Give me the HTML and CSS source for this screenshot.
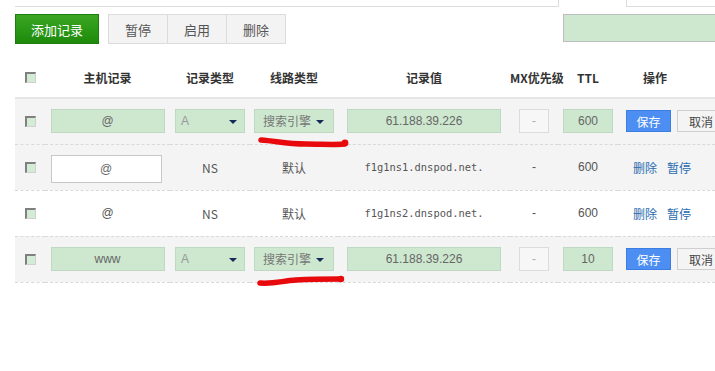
FILE: index.html
```html
<!DOCTYPE html>
<html lang="zh-CN">

<head>
    <meta charset="UTF-8">
    <title>记录管理</title>
    <link rel="stylesheet" href="styles.css">
</head>

<body>
    <div class="top-strip">
        <div class="strip-box strip-left"></div>
        <div class="strip-box strip-right"></div>
    </div>

    <div class="toolbar">
        <button class="btn-add">添加记录</button>
        <div class="btn-group">
            <button class="btn-gray">暂停</button>
            <button class="btn-gray">启用</button>
            <button class="btn-gray">删除</button>
        </div>
        <div class="search-box"></div>
    </div>

    <table class="records">
        <colgroup>
            <col style="width:30px">
            <col style="width:125px">
            <col style="width:80px">
            <col style="width:88px">
            <col style="width:172px">
            <col style="width:48px">
            <col style="width:60px">
            <col style="width:112px">
        </colgroup>
        <thead>
            <tr>
                <th><span class="check"></span></th>
                <th>主机记录</th>
                <th>记录类型</th>
                <th>线路类型</th>
                <th>记录值</th>
                <th>MX优先级</th>
                <th>TTL</th>
                <th class="th-op">操作</th>
            </tr>
        </thead>
        <tbody>
            <!-- ligne en édition -->
            <tr class="editing">
                <td><span class="check"></span></td>
                <td><span class="field f-host">@</span></td>
                <td><span class="field f-select f-type">A<i class="caret"></i></span></td>
                <td class="mark">
                    <span class="field f-select f-line">搜索引擎<i class="caret"></i></span>
                    <svg class="scribble s1" width="96" height="14" viewBox="0 0 96 14">
                        <path d="M5 4 C20 5 30 8 50 8 C65 8 78 9 88 8" stroke="#e8090c" stroke-width="5.5" fill="none" stroke-linecap="round" />
                        <circle cx="89" cy="7" r="3.4" fill="#e8090c" />
                    </svg>
                </td>
                <td><span class="field f-value">61.188.39.226</span></td>
                <td><span class="field f-mx">-</span></td>
                <td><span class="field f-ttl">600</span></td>
                <td class="td-op"><button class="btn-save">保存</button><button class="btn-cancel">取消</button></td>
            </tr>
            <tr class="gray">
                <td><span class="check"></span></td>
                <td><span class="field f-plain">@</span></td>
                <td>NS</td>
                <td>默认</td>
                <td class="mono">f1g1ns1.dnspod.net.</td>
                <td class="dash">-</td>
                <td class="num">600</td>
                <td class="td-op links"><a href="#">删除</a><a href="#">暂停</a></td>
            </tr>
            <tr>
                <td><span class="check"></span></td>
                <td class="num">@</td>
                <td>NS</td>
                <td>默认</td>
                <td class="mono">f1g1ns2.dnspod.net.</td>
                <td class="dash">-</td>
                <td class="num">600</td>
                <td class="td-op links"><a href="#">删除</a><a href="#">暂停</a></td>
            </tr>
            <tr class="editing">
                <td><span class="check"></span></td>
                <td><span class="field f-host">www</span></td>
                <td><span class="field f-select f-type">A<i class="caret"></i></span></td>
                <td class="mark">
                    <span class="field f-select f-line">搜索引擎<i class="caret"></i></span>
                    <svg class="scribble s2" width="96" height="14" viewBox="0 0 96 14">
                        <path d="M4 10 C18 11 26 8 40 7 C58 6 72 6 84 6" stroke="#e8090c" stroke-width="5.5" fill="none" stroke-linecap="round" />
                        <circle cx="85" cy="6" r="3.2" fill="#e8090c" />
                    </svg>
                </td>
                <td><span class="field f-value">61.188.39.226</span></td>
                <td><span class="field f-mx">-</span></td>
                <td><span class="field f-ttl">10</span></td>
                <td class="td-op"><button class="btn-save">保存</button><button class="btn-cancel">取消</button></td>
            </tr>
        </tbody>
    </table>
</body>

</html>
```

FILE: styles.css
```css
* {
    margin: 0;
    padding: 0;
    box-sizing: border-box;
}

body {
    font-family: "Noto Sans CJK SC", "Liberation Sans", sans-serif;
    font-size: 12px;
    color: #555;
    background: #fff;
    width: 715px;
    height: 371px;
    overflow: hidden;
}

/* Bande du haut (champs coupés) */
.top-strip {
    display: flex;
    height: 7px;
}

.strip-box {
    border-bottom: 1px solid #dcdcdc;
}

.strip-left {
    width: 544px;
    margin-left: 15px;
    border-right: 1px solid #dcdcdc;
}

.strip-right {
    width: 89px;
    margin-left: 67px;
    border-left: 1px solid #dcdcdc;
}

/* Barre d'outils */
.toolbar {
    display: flex;
    align-items: flex-start;
    margin-top: 7px;
    padding-left: 15px;
    height: 30px;
}

.btn-add {
    width: 84px;
    height: 30px;
    border: 1px solid #1f7c0e;
    background: linear-gradient(#3aa623, #1d8a0b);
    color: #fff;
    font-family: inherit;
    font-size: 13px;
}

.btn-group {
    display: flex;
    margin-left: 9px;
}

.btn-gray {
    width: 60px;
    height: 30px;
    border: 1px solid #dcdcdc;
    background: #f3f3f3;
    color: #555;
    font-family: inherit;
    font-size: 13px;
}

.btn-gray + .btn-gray {
    margin-left: -1px;
}

.search-box {
    margin-left: auto;
    width: 152px;
    height: 28px;
    background: #cde8cf;
    border: 1px solid #bdbdbd;
    border-right: none;
}

/* Tableau */
.records {
    margin-top: 13px;
    margin-left: 15px;
    border-collapse: collapse;
    table-layout: fixed;
    width: 715px;
}

.records th {
    height: 41px;
    border-bottom: 2px solid #e6e6e6;
    font-size: 12px;
    font-weight: bold;
    color: #333;
    text-align: center;
    vertical-align: middle;
    white-space: nowrap;
}

.records th.th-op {
    text-align: left;
    padding-left: 25px;
}

.records td {
    height: 46px;
    border-bottom: 1px dashed #d9d9d9;
    text-align: center;
    vertical-align: middle;
    color: #555;
}

.records tr.editing td,
.records tr.gray td {
    background: #f4f4f4;
}

.check {
    display: block;
    margin: 0 auto;
    width: 11px;
    height: 11px;
    background: #d3ecd6;
    border-top: 2px solid #808080;
    border-left: 2px solid #808080;
    border-right: 1px solid #d0d0d0;
    border-bottom: 1px solid #d0d0d0;
}

/* Champs */
.field {
    display: inline-block;
    height: 24px;
    line-height: 22px;
    background: #cde8cf;
    border: 1px solid #bfd8c1;
    color: #666;
    font-family: "Liberation Sans", "Noto Sans CJK SC", sans-serif;
    font-size: 12px;
    vertical-align: middle;
    position: relative;
}

.f-host {
    width: 114px;
}

.f-plain {
    width: 111px;
    height: 28px;
    line-height: 26px;
    background: #fff;
    border-color: #c8c8c8;
    margin-left: -3px;
    margin-top: 3px;
}

.f-select {
    text-align: left;
    padding-left: 5px;
}

.f-type {
    width: 70px;
    color: #999;
}

.f-line {
    width: 80px;
    padding-left: 8px;
    color: #777;
    font-family: "Noto Sans CJK SC", sans-serif;
}

.caret {
    position: absolute;
    right: 7px;
    top: 10px;
    width: 0;
    height: 0;
    border-left: 4px solid transparent;
    border-right: 4px solid transparent;
    border-top: 4px solid #142b5a;
}

.f-line .caret {
    right: 9px;
}

.f-value {
    width: 154px;
}

.f-mx {
    width: 30px;
    background: #f7f7f7;
    border-color: #dcdcdc;
    color: #aaa;
}

.f-ttl {
    width: 50px;
}

/* Repère rouge */
.mark {
    position: relative;
}

.scribble {
    position: absolute;
    left: 6px;
    pointer-events: none;
}

.s1 {
    top: 37px;
}

.s2 {
    top: 36px;
}

/* Valeurs */
.mono {
    font-family: "DejaVu Sans Mono", monospace;
    font-size: 10.4px;
    color: #555;
}

.num {
    font-family: "Liberation Sans", sans-serif;
    color: #555;
}

.dash {
    font-family: "Liberation Sans", sans-serif;
    color: #888;
}

/* Opérations */
.records td.td-op {
    text-align: left;
    padding-left: 8px;
    white-space: nowrap;
}

.btn-save {
    width: 45px;
    height: 22px;
    background: #4d8ef3;
    border: 1px solid #3b7de3;
    color: #fff;
    font-family: "Noto Sans CJK SC", sans-serif;
    font-size: 12px;
    vertical-align: middle;
}

.btn-cancel {
    width: 48px;
    height: 22px;
    margin-left: 6px;
    background: #f4f4f4;
    border: 1px solid #cfcfcf;
    color: #444;
    font-family: "Noto Sans CJK SC", sans-serif;
    font-size: 12px;
    vertical-align: middle;
}

.links a {
    color: #2a6cb0;
    text-decoration: none;
    margin-left: 7px;
}

.links a + a {
    margin-left: 10px;
}
```
